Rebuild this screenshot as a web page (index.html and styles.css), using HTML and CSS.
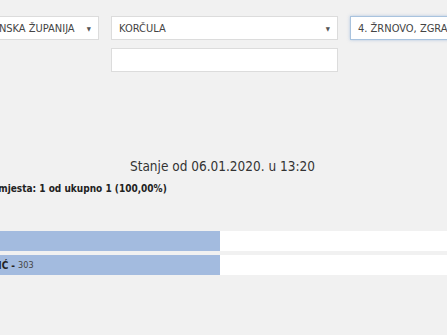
FILE: index.html
```html
<!DOCTYPE html>
<html lang="hr">
<head>
    <meta charset="UTF-8">
    <title>Rezultati izbora</title>
    <link rel="stylesheet" href="styles.css">
</head>
<body>
    <!-- Odabir lokacije -->
    <div class="filters">
        <div class="filter-col">
            <div class="select">
                <span class="select-text">DUBROVAČKO-NERETVANSKA ŽUPANIJA</span>
                <span class="arrow">&#9660;</span>
            </div>
        </div>
        <div class="filter-col">
            <div class="select">
                <span class="select-text">KORČULA</span>
                <span class="arrow">&#9660;</span>
            </div>
            <input type="text" class="search">
        </div>
        <div class="filter-col">
            <div class="select active">
                <span class="select-text">4. ŽRNOVO, ZGRADA</span>
                <span class="arrow">&#9660;</span>
            </div>
        </div>
    </div>

    <!-- Rezultati -->
    <div class="results">
        <h2 class="status">Stanje od 06.01.2020. u 13:20</h2>
        <div class="processed">Obrađena biračka mjesta: 1 od ukupno 1 (100,00%)</div>

        <div class="rows">
            <div class="bar">
                <div class="fill" style="width: 348px"></div>
            </div>
            <div class="bar">
                <div class="fill" style="width: 348px">
                    <span class="name">ANA HORVATIĆ -</span>
                    <span class="votes">303</span>
                </div>
            </div>
        </div>
    </div>
</body>
</html>
```

FILE: styles.css
```css
* {
    box-sizing: border-box;
    margin: 0;
    padding: 0;
}

html, body {
    overflow: hidden;
}

body {
    font-family: 'DejaVu Sans Condensed', 'DejaVu Sans', Verdana, sans-serif;
    background-color: #f1f1f1;
    color: #333;
    width: 447px;
    height: 335px;
}

.filters {
    display: grid;
    grid-template-columns: 227px 227px 227px;
    gap: 12px;
    margin-left: -128px;
    padding-top: 16px;
}

.filter-col {
    display: flex;
    flex-direction: column;
    gap: 8px;
}

.select {
    height: 24px;
    background-color: #fff;
    border: 1px solid #dcdcdc;
    display: flex;
    align-items: center;
    padding: 0 7px 0 7px;
    font-size: 11px;
    color: #444;
    white-space: nowrap;
    overflow: hidden;
}

.select-text {
    flex: 1;
}

.arrow {
    font-size: 6px;
    color: #555;
}

.select.active {
    border-color: #a9c3de;
    box-shadow: 0 0 3px rgba(120, 160, 210, 0.5);
}

.search {
    height: 24px;
    border: 1px solid #dcdcdc;
    background-color: #fff;
    outline: none;
}

.results {
    margin-left: -128px;
    width: 711px;
}

.status {
    font-size: 13.5px;
    font-weight: normal;
    color: #333;
    text-align: center;
    margin-top: 86px;
    padding-right: 10px;
}

.processed {
    font-size: 10px;
    font-weight: bold;
    color: #222;
    margin-top: 9px;
    padding-left: 33px;
}

.rows {
    margin-top: 37px;
    display: flex;
    flex-direction: column;
    gap: 4px;
}

.bar {
    height: 20px;
    background-color: #fff;
    display: flex;
}

.fill {
    height: 100%;
    background-color: #a3bbdf;
    display: flex;
    align-items: center;
    gap: 3px;
    padding-left: 61px;
    font-size: 10px;
    color: #333;
    white-space: nowrap;
}

.name {
    font-weight: bold;
    color: #222;
}

.votes {
    font-size: 9px;
    color: #444;
}
```
